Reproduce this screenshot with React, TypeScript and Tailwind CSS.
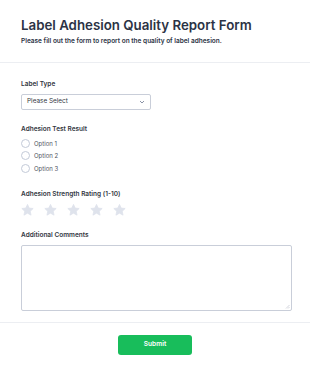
import React from "react";

function Star() {
  return (
    <svg width="13" height="12" viewBox="0 0 24 23" className="shrink-0">
      <path
        d="M12 0.8l3.3 7 7.6 0.9-5.6 5.2 1.5 7.5L12 17.6l-6.8 3.8 1.5-7.5L1.1 8.7l7.6-0.9z"
        fill="#dfe3ec"
        strokeLinejoin="round"
        stroke="#dfe3ec"
        strokeWidth="1.5"
      />
    </svg>
  );
}

function Radio({ label }: { label: string }) {
  return (
    <label className="flex items-center gap-[4px] h-[12.5px]">
      <span className="w-[9px] h-[9px] rounded-full border border-[#c3cad8] bg-white" />
      <span className="text-[6px] text-[#50555f]">{label}</span>
    </label>
  );
}

export default function App() {
  return (
    <div
      className="w-[310px] h-[371px] bg-white overflow-hidden"
      style={{ fontFamily: "Inter, 'Noto Sans', sans-serif" }}
    >
      <div className="px-[21px] pt-[17px] pb-[16.5px] border-b border-[#eceef2]">
        <h1 className="text-[13.3px] leading-[17px] font-semibold text-[#2c3345] whitespace-nowrap">
          Label Adhesion Quality Report Form
        </h1>
        <p className="text-[6.5px] leading-[9px] font-semibold text-[#2c3345] mt-[2.5px] whitespace-nowrap">
          Please fill out the form to report on the quality of label adhesion.
        </p>
      </div>

      <div className="px-[21px] pt-[17px] border-b border-[#eceef2] pb-[11px]">
        <div className="text-[6.5px] font-semibold text-[#33373f] leading-[9px]">Label Type</div>
        <div className="mt-[4.5px] w-[130px] h-[16px] border border-[#c9ced9] rounded-[2px] flex items-center justify-between px-[5px]">
          <span className="text-[6.4px] text-[#33373f]">Please Select</span>
          <svg width="6" height="4" viewBox="0 0 6 4">
            <path d="M1 1l2 2 2-2" fill="none" stroke="#8b93a7" strokeWidth="1" />
          </svg>
        </div>

        <div className="mt-[15.5px] text-[6.5px] font-semibold text-[#33373f] leading-[9px]">
          Adhesion Test Result
        </div>
        <div className="mt-[3px] flex flex-col">
          <Radio label="Option 1" />
          <Radio label="Option 2" />
          <Radio label="Option 3" />
        </div>

        <div className="mt-[15px] text-[6.5px] font-semibold text-[#33373f] leading-[9px]">
          Adhesion Strength Rating (1-10)
        </div>
        <div className="mt-[5.5px] flex gap-[10px]">
          <Star />
          <Star />
          <Star />
          <Star />
          <Star />
        </div>

        <div className="mt-[14.5px] text-[6.5px] font-semibold text-[#33373f] leading-[9px]">
          Additional Comments
        </div>
        <div className="mt-[5.5px] w-[271px] h-[66px] border border-[#c9ced9] rounded-[2px] relative">
          <svg width="5" height="5" viewBox="0 0 5 5" className="absolute right-[1px] bottom-[1px]">
            <path d="M4.5 1L1 4.5M4.5 3L3 4.5" stroke="#b5bac6" strokeWidth="0.6" />
          </svg>
        </div>
      </div>

      <div className="flex justify-center pt-[11.5px]">
        <button className="w-[74px] h-[20px] rounded-[3px] bg-[#18bd5b] text-white text-[6.6px] font-semibold">
          Submit
        </button>
      </div>
    </div>
  );
}
